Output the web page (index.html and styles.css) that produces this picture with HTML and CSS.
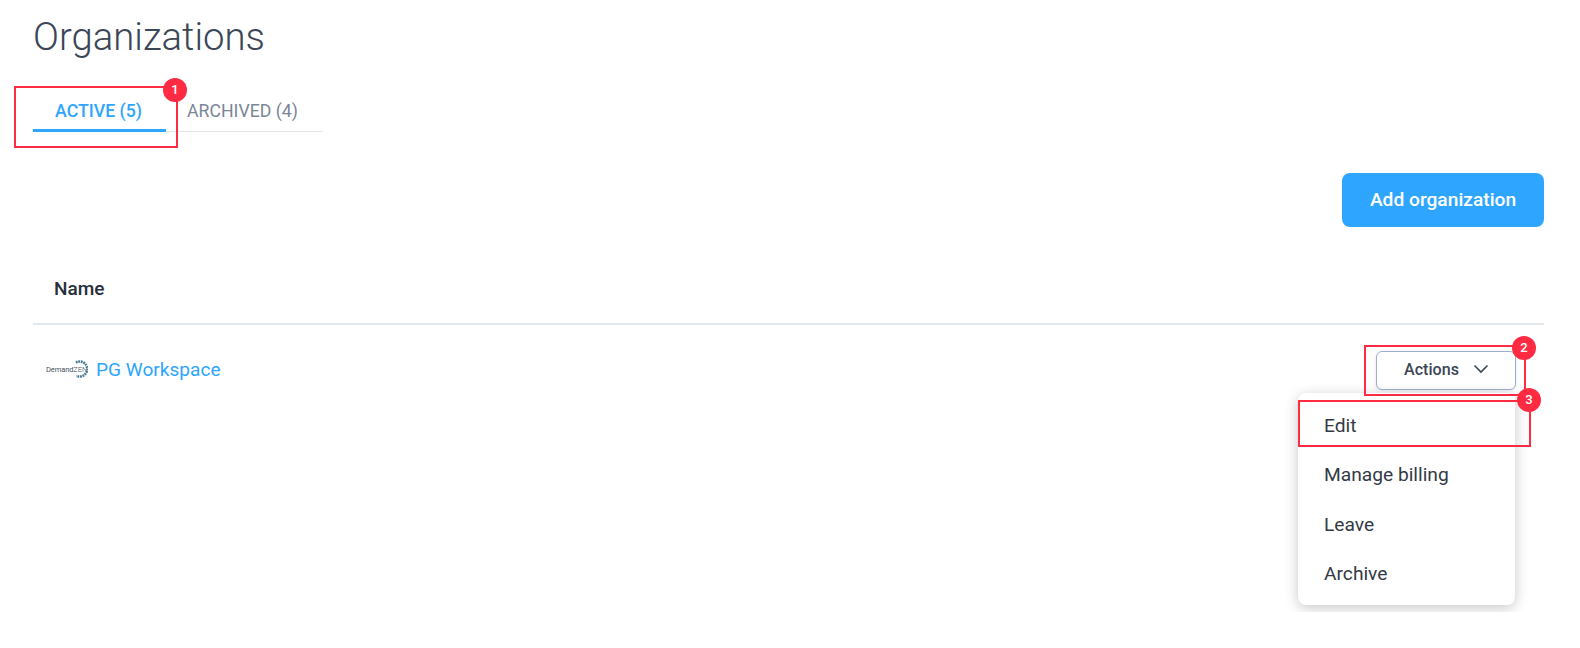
FILE: index.html
```html
<!DOCTYPE html>
<html lang="en">
<head>
  <meta charset="UTF-8">
  <title>Organizations</title>
  <link rel="stylesheet" href="styles.css">
</head>
<body>
  <div class="page">
    <h1 class="title">Organizations</h1>

    <div class="tabs">
      <a class="tab active">ACTIVE (5)</a>
      <a class="tab">ARCHIVED (4)</a>
    </div>

    <div class="toolbar">
      <button class="btn-primary">Add organization</button>
    </div>

    <div class="table-head">Name</div>

    <div class="table-row">
      <a class="org">
        <span class="logo">
          <span class="logo-text">Demand<span class="logo-zen">ZEN</span></span>
          <svg class="logo-ring" width="16" height="20" viewBox="0 0 16 20">
            <path d="M4 3.500A7.500 7.500 0 1 1 4.500 16.800" fill="none" stroke="#4a7a92" stroke-width="2.600" stroke-dasharray="1.800 .7"/>
          </svg>
        </span>
        PG Workspace
      </a>
      <button class="btn-actions">
        Actions
        <svg width="16" height="10" viewBox="0 0 16 10">
          <path d="M1.500 1.500L8 8l6.500-6.500" fill="none" stroke="#3b4656" stroke-width="1.600"/>
        </svg>
      </button>
    </div>

    <!-- Dropdown -->
    <div class="menu">
      <div class="menu-item">Edit</div>
      <div class="menu-item">Manage billing</div>
      <div class="menu-item">Leave</div>
      <div class="menu-item">Archive</div>
    </div>

    <!-- Annotations -->
    <div class="mark mark-tab"></div>
    <div class="mark mark-actions"></div>
    <div class="mark mark-edit"></div>
    <div class="badge badge-1">1</div>
    <div class="badge badge-2">2</div>
    <div class="badge badge-3">3</div>
  </div>
</body>
</html>
```

FILE: styles.css
```css
body {
  margin: 0;
  background-color: #fff;
  font-family: Roboto, sans-serif;
}

.page {
  position: relative;
  height: 612px;
  padding: 0 36px 0 33px;
  overflow: hidden;
}

.title {
  margin: 0;
  padding: 14px 0 0;
  font-size: 38.300px;
  line-height: 46px;
  font-weight: 300;
  color: #3b4656;
}

.tabs {
  display: flex;
  width: 290px;
  margin-top: 26px;
  border-bottom: 1px solid #e3e5e8;
}

.tab {
  box-sizing: border-box;
  height: 45px;
  padding-top: 15px;
  font-size: 17.700px;
  line-height: 20px;
  color: #7b8698;
}

.tab.active {
  width: 133px;
  margin-bottom: -1px;
  margin-right: 21px;
  height: 46px;
  padding-right: 2px;
  text-align: center;
  font-weight: 500;
  color: #2ea6ff;
  border-bottom: 3px solid #2ea6ff;
}

.toolbar {
  display: flex;
  justify-content: flex-end;
  margin-top: 41px;
}

.btn-primary {
  width: 202px;
  height: 54px;
  padding-bottom: 2px;
  border: none;
  border-radius: 8px;
  background-color: #2ea6ff;
  color: #fff;
  font-family: inherit;
  font-size: 19.200px;
  font-weight: 500;
}

.table-head {
  height: 98px;
  box-sizing: border-box;
  padding: 50px 0 0 21px;
  font-size: 19px;
  line-height: 24px;
  font-weight: 500;
  color: #272f3a;
  border-bottom: 2px solid #e3e8ef;
}

.table-row {
  display: flex;
  align-items: center;
  justify-content: space-between;
  height: 40px;
  margin-top: 24px;
  padding: 0 28px 0 13px;
}

.org {
  display: flex;
  align-items: center;
  gap: 8px;
  font-size: 19.100px;
  color: #2ea6ff;
}

.logo {
  display: flex;
  align-items: center;
  width: 42px;
  height: 20px;
}

.logo-text {
  flex: none;
  width: 26px;
  font-size: 7.500px;
  letter-spacing: -0.1px;
  white-space: nowrap;
  color: #46505f;
}

.logo-zen {
  font-weight: 300;
}

.logo-ring {
  flex: none;
}

.btn-actions {
  display: flex;
  align-items: center;
  justify-content: center;
  gap: 14px;
  width: 140px;
  height: 39px;
  margin-top: 2px;
  padding: 0 0 2px 1px;
  border: 1px solid #9db0cc;
  border-radius: 6px;
  background-color: #fff;
  box-shadow: 0 1px 4px rgba(40, 60, 90, 0.12);
  color: #3b4656;
  font-family: inherit;
  font-size: 16.100px;
  font-weight: 500;
}

.menu {
  position: absolute;
  left: 1298px;
  top: 393px;
  box-sizing: border-box;
  width: 217px;
  height: 212px;
  padding-top: 8px;
  border-radius: 8px;
  background-color: #fff;
  box-shadow: 0 3px 14px rgba(0, 0, 0, 0.22);
}

.menu-item {
  height: 49.300px;
  padding-left: 26px;
  font-size: 19.200px;
  line-height: 49px;
  color: #333a45;
}

.mark {
  position: absolute;
  box-sizing: border-box;
  border: 2px solid #ff2b42;
}

.mark-tab {
  left: 14px;
  top: 86px;
  width: 164px;
  height: 62px;
}

.mark-actions {
  left: 1364px;
  top: 345px;
  width: 162px;
  height: 51px;
}

.mark-edit {
  left: 1298px;
  top: 400px;
  width: 233px;
  height: 47px;
}

.badge {
  position: absolute;
  width: 24px;
  height: 24px;
  border-radius: 50%;
  background-color: #ff2b42;
  color: #fff;
  font-size: 13px;
  font-weight: 500;
  line-height: 24px;
  text-align: center;
}

.badge-1 {
  left: 163px;
  top: 78px;
}

.badge-2 {
  left: 1512px;
  top: 336px;
}

.badge-3 {
  left: 1517px;
  top: 388px;
}
```
